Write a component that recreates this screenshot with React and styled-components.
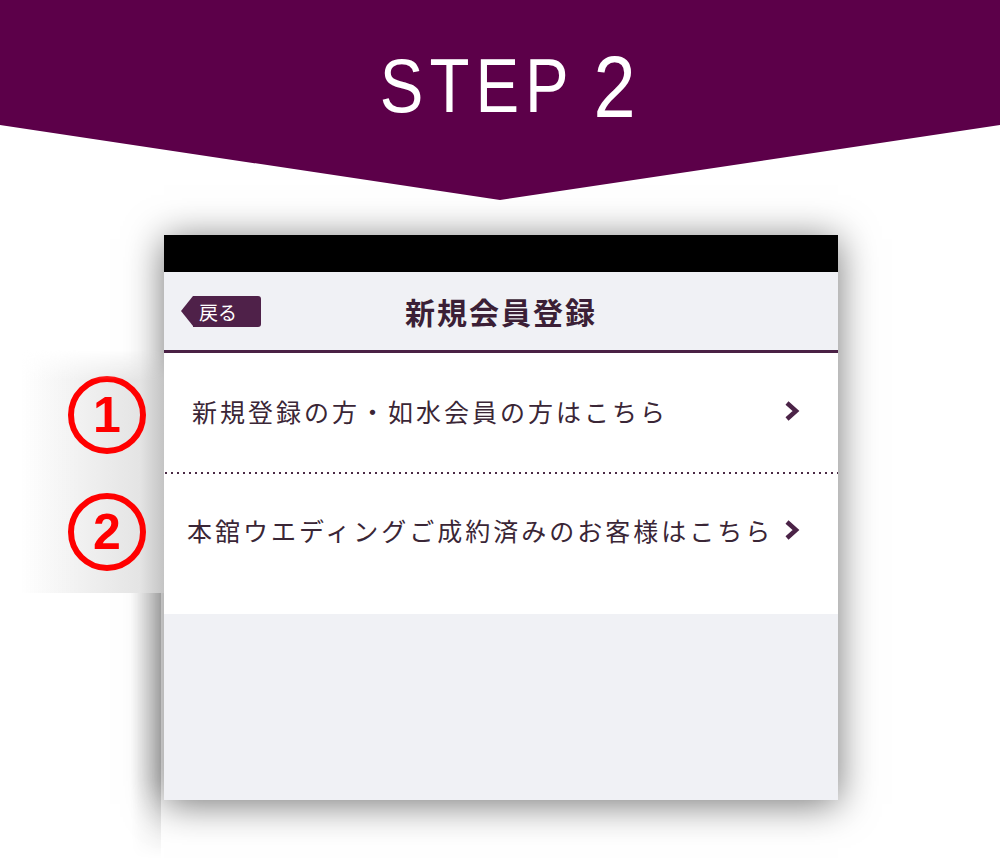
import React from "react";
import styled, { createGlobalStyle } from "styled-components";

const GlobalStyle = createGlobalStyle`
  html, body {
    margin: 0;
    padding: 0;
    background: #ffffff;
  }
  body {
    font-family: "Noto Sans CJK JP", "Noto Sans", sans-serif;
    overflow: hidden;
  }
`;

const Page = styled.div`
  width: 1000px;
  height: 859px;
  overflow: hidden;
  background: #ffffff;
`;

const Banner = styled.header`
  position: relative;
  z-index: 2;
  height: 200px;
  background: #5c0049;
  clip-path: polygon(0 0, 100% 0, 100% 125px, 50% 100%, 0 125px);
  display: flex;
  justify-content: center;
  padding-top: 48px;
  padding-left: 16px;
  box-sizing: border-box;
`;

const Heading = styled.h1`
  margin: 0;
  height: 75px;
  font-family: "Liberation Sans", Arial, sans-serif;
  font-weight: 400;
  font-size: 76px;
  line-height: 75px;
  letter-spacing: 7px;
  color: #ffffff;
  transform: scaleX(0.86);
  white-space: nowrap;
`;

const Num = styled.span`
  font-size: 88px;
  letter-spacing: 0;
  vertical-align: -5px;
  margin-left: 22px;
`;

const Stage = styled.main`
  display: flex;
  margin-top: 35px;
`;

const Gutter = styled.aside`
  width: 164px;
  flex-shrink: 0;
  display: flex;
  flex-direction: column;
  height: 624px;
`;

const Shade = styled.div`
  margin-top: 115px;
  height: 243px;
  display: flex;
  flex-direction: column;
  align-items: flex-end;
  gap: 39px;
  padding: 26px 18px 0 0;
  box-sizing: border-box;
  background: linear-gradient(
    to right,
    rgba(255, 255, 255, 0) 20px,
    #f1f1f1 80px,
    #e4e4e4 140px,
    #c4c4c4 164px
  );
  -webkit-mask-image: linear-gradient(to bottom, transparent 0, #000 30px);
  mask-image: linear-gradient(to bottom, transparent 0, #000 30px);
`;

const Strip = styled.div`
  flex: 1;
  width: 30px;
  margin-left: auto;
  margin-right: 3px;
  background: linear-gradient(to right, rgba(0, 0, 0, 0), rgba(0, 0, 0, 0.18));
  -webkit-mask-image: linear-gradient(to bottom, #000 70%, transparent 100%);
  mask-image: linear-gradient(to bottom, #000 70%, transparent 100%);
`;

const Mark = styled.div`
  width: 78px;
  height: 78px;
  box-sizing: border-box;
  border: 6px solid #ff0000;
  border-radius: 50%;
  display: flex;
  align-items: center;
  justify-content: center;
  font-family: "Liberation Sans", Arial, sans-serif;
  font-weight: 700;
  font-size: 50px;
  line-height: 1;
  color: #ff0000;
`;

const Phone = styled.section`
  width: 674px;
  height: 565px;
  flex-shrink: 0;
  display: flex;
  flex-direction: column;
  background: #f0f1f5;
  box-shadow: 0 4px 36px rgba(0, 0, 0, 0.55);
`;

const StatusBar = styled.div`
  height: 37px;
  background: #000000;
`;

const NavBar = styled.nav`
  height: 78px;
  display: grid;
  grid-template-columns: 1fr auto 1fr;
  align-items: center;
  padding: 0 17px;
  background: #f0f1f5;
  border-bottom: 3px solid #4a2145;
`;

const BackButton = styled.button`
  position: relative;
  justify-self: start;
  margin-left: 12px;
  height: 31px;
  width: 68px;
  padding: 0 0 0 6px;
  border: none;
  border-radius: 0 3px 3px 0;
  background: #4f2149;
  color: #ffffff;
  font-family: "Noto Sans CJK JP", sans-serif;
  font-size: 19px;
  line-height: 31px;
  text-align: left;

  &::before {
    content: "";
    position: absolute;
    left: -12px;
    top: 0;
    border-right: 12px solid #4f2149;
    border-top: 15.5px solid transparent;
    border-bottom: 15.5px solid transparent;
  }
`;

const Title = styled.h2`
  margin: 0;
  font-family: "Noto Sans CJK JP", sans-serif;
  font-weight: 700;
  font-size: 30px;
  letter-spacing: 2px;
  color: #3b1f36;
`;

const List = styled.ul`
  margin: 0;
  padding: 0 0 26px 0;
  list-style: none;
  background: #ffffff;
`;

const Row = styled.li`
  height: ${(p) => p.height}px;
  box-sizing: border-box;
  display: flex;
  align-items: center;
  justify-content: space-between;
  padding: 0 38px 3px ${(p) => p.indent}px;
`;

const Divider = styled.li`
  height: 2px;
  background-image: linear-gradient(to right, #4a2a45 2px, transparent 2px);
  background-size: 6px 2px;
  background-position: 1px 0;
`;

const RowLabel = styled.span`
  font-family: "Noto Sans CJK JP", sans-serif;
  font-weight: 400;
  font-size: 25px;
  letter-spacing: 3px;
  color: #3a2636;
  white-space: nowrap;
`;

const Chevron = () => (
  <svg width="16" height="22" viewBox="0 0 16 22">
    <polyline
      points="3,3 12,11 3,19"
      fill="none"
      stroke="#4b2347"
      strokeWidth="4.5"
      strokeLinejoin="miter"
    />
  </svg>
);

const Filler = styled.div`
  flex: 1;
  background: #f0f1f5;
`;

const options = [
  { label: "新規登録の方・如水会員の方はこちら", indent: 28, height: 119 },
  { label: "本舘ウエディングご成約済みのお客様はこちら", indent: 23, height: 114 },
];

const App = () => {
  return (
    <Page>
      <GlobalStyle />
      <Banner>
        <Heading>
          STEP<Num>2</Num>
        </Heading>
      </Banner>
      <Stage>
        <Gutter>
          <Shade>
            <Mark>1</Mark>
            <Mark>2</Mark>
          </Shade>
          <Strip />
        </Gutter>
        <Phone>
          <StatusBar />
          <NavBar>
            <BackButton>戻る</BackButton>
            <Title>新規会員登録</Title>
            <span />
          </NavBar>
          <List>
            {options.map((option, i) => (
              <React.Fragment key={option.label}>
                {i > 0 && <Divider />}
                <Row indent={option.indent} height={option.height}>
                  <RowLabel>{option.label}</RowLabel>
                  <Chevron />
                </Row>
              </React.Fragment>
            ))}
          </List>
          <Filler />
        </Phone>
      </Stage>
    </Page>
  );
};

export default App;
